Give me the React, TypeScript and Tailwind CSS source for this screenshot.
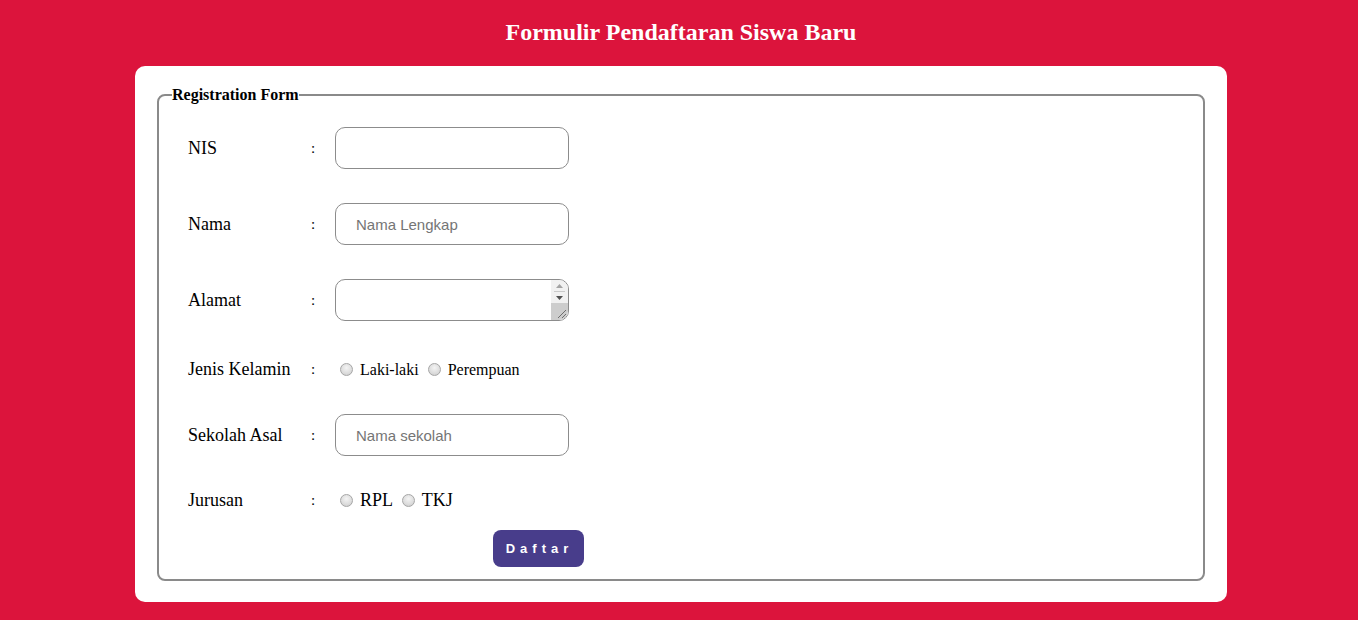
import React from "react";

const serif = "font-['Liberation_Serif','Times_New_Roman',serif]";
const sans = "font-['Liberation_Sans',Arial,sans-serif]";

const Radio = ({ name }: { name: string }) => (
  <input
    type="radio"
    name={name}
    className="appearance-none inline-block w-[13px] h-[13px] rounded-full border border-[#a6a6a6] bg-[radial-gradient(circle_at_50%_35%,#f4f4f4_0%,#dcdcdc_60%,#c8c8c8_100%)] ml-[5px] mr-[7px] align-[-1px]"
  />
);

const Row = ({
  label,
  className = "",
  children,
}: {
  label: string;
  className?: string;
  children: React.ReactNode;
}) => (
  <div className={`flex items-center h-[42px] ${className}`}>
    <span className="w-[123px] text-[18px]">{label}</span>
    <span className="w-[24px] text-[15px]">:</span>
    <div className="flex items-center">{children}</div>
  </div>
);

const inputCls = `w-[234px] h-[42px] rounded-[10px] border border-[#8c8c8c] bg-white pl-[20px] text-[15px] ${sans} placeholder:text-[#757575] outline-none`;

export default function App() {
  return (
    <div className={`min-h-screen bg-[#dc143c] ${serif} text-black`}>
      <h2 className="pt-[17px] pb-[19px] pl-[4px] text-center text-[24px] leading-[30px] font-bold text-white">
        Formulir Pendaftaran Siswa Baru
      </h2>

      <div className="w-[1092px] ml-[135px] bg-white rounded-[10px] pt-[20px] pb-[21px] px-[22px]">
        <fieldset className="border-2 border-[#8a8a8a] rounded-[8px] px-[13px] pb-[12px] m-0">
          <legend className="px-0 text-[16px] leading-[18px] font-bold">
            Registration Form
          </legend>

          <div className="flex flex-col pl-[16px] pt-[23px]">
            <Row label="NIS">
              <input type="text" className={inputCls} />
            </Row>

            <Row label="Nama" className="mt-[34px]">
              <input type="text" placeholder="Nama Lengkap" className={inputCls} />
            </Row>

            <Row label="Alamat" className="mt-[34px]">
              <div className="relative w-[234px] h-[42px] rounded-[10px] border border-[#8c8c8c] bg-white overflow-hidden">
                <textarea className="w-full h-full resize-none outline-none bg-transparent" />
                {/* classic scrollbar + resize grip */}
                <div className="absolute right-0 top-0 bottom-0 w-[17px] flex flex-col bg-[#f1f1f1]">
                  <div className="h-[11px] flex items-center justify-center">
                    <svg width="7" height="4" viewBox="0 0 7 4">
                      <path d="M0 4 L3.5 0 L7 4 Z" fill="#a3a3a3" />
                    </svg>
                  </div>
                  <div className="h-px mx-[3px] bg-[#c9c9c9]" />
                  <div className="h-[11px] flex items-center justify-center">
                    <svg width="7" height="4" viewBox="0 0 7 4">
                      <path d="M0 0 L7 0 L3.5 4 Z" fill="#505050" />
                    </svg>
                  </div>
                  <div className="flex-1 bg-[#cdcdcd] relative">
                    <svg className="absolute right-[2px] bottom-[2px]" width="9" height="9" viewBox="0 0 9 9">
                      <path d="M9 1 L1 9 M9 5 L5 9" stroke="#6e6e6e" strokeWidth="1" />
                    </svg>
                  </div>
                </div>
              </div>
            </Row>

            <Row label="Jenis Kelamin" className="mt-[27px]">
              <div className="text-[16px] leading-none pt-[2px]">
                <Radio name="jk" />
                Laki-laki <Radio name="jk" />
                Perempuan
              </div>
            </Row>

            <Row label="Sekolah Asal" className="mt-[24px]">
              <input type="text" placeholder="Nama sekolah" className={inputCls} />
            </Row>

            <Row label="Jurusan" className="mt-[23px]">
              <div className="text-[18px] leading-none">
                <Radio name="jurusan" />
                RPL <Radio name="jurusan" />
                TKJ
              </div>
            </Row>

            <div className="mt-[9px] flex">
              <button
                className={`ml-[305px] h-[37px] w-[91px] rounded-[8px] bg-[#483d8b] text-white text-[13px] font-bold tracking-[5px] pl-[2px] ${sans}`}
              >
                Daftar
              </button>
            </div>
          </div>
        </fieldset>
      </div>
    </div>
  );
}
